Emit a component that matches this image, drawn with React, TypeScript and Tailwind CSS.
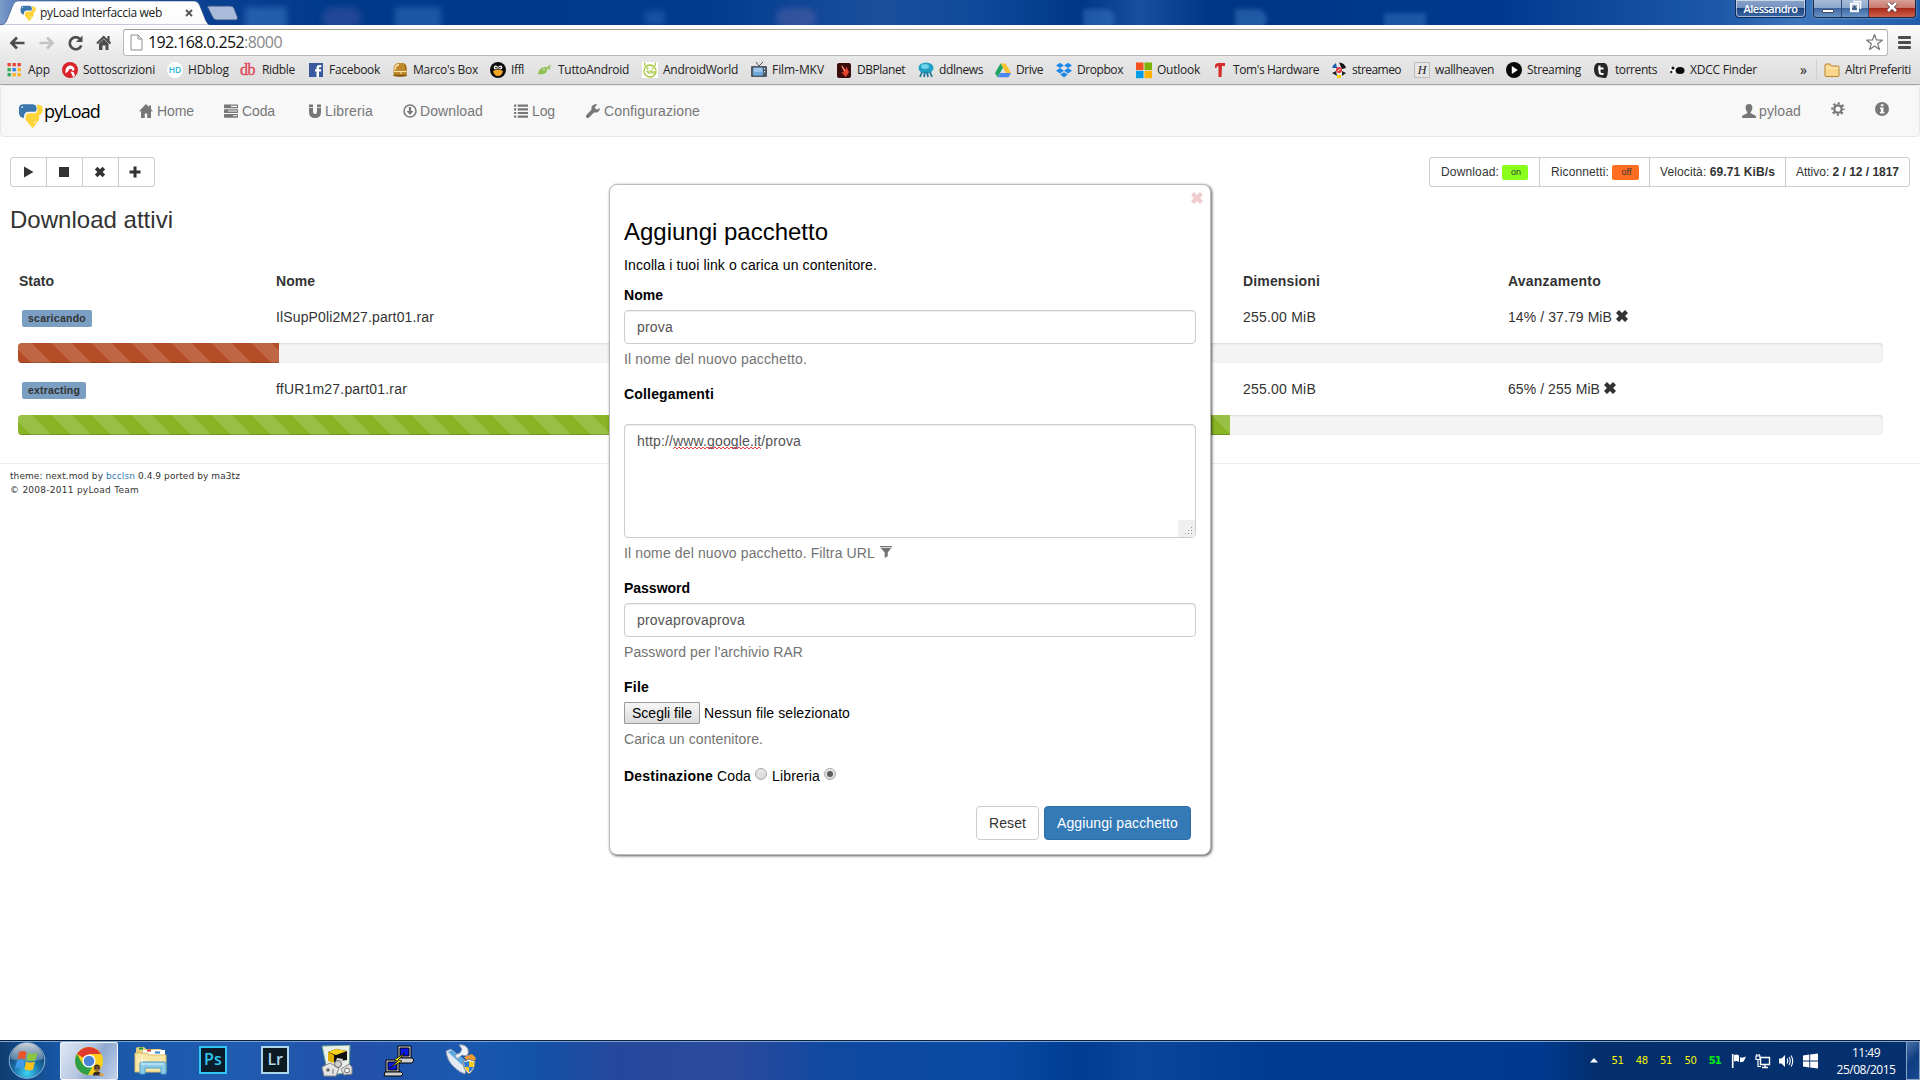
import React, { useLayoutEffect, useRef } from "react";

/** Single-line text whose tracking is adjusted so that it fills exactly `w` pixels. */
function Fit({ w, className = "", children }: { w: number; className?: string; children: React.ReactNode }) {
  const ref = useRef<HTMLSpanElement>(null);
  useLayoutEffect(() => {
    const el = ref.current;
    if (!el) return;
    el.style.letterSpacing = "0px";
    const n = (el.textContent || "").length || 1;
    el.style.letterSpacing = `${(w - el.getBoundingClientRect().width) / n}px`;
  }, [w]);
  return (
    <span ref={ref} className={`inline-block whitespace-pre ${className}`}>
      {children}
    </span>
  );
}

const UI = "font-['Open_Sans','Noto_Sans',sans-serif]";

function PyLogo({ size }: { size: number }) {
  return (
    <svg width={size} height={size} viewBox="0 0 27 27" className="shrink-0">
      <path d="M1 6q0-4 4-4.600h11q4 .6 4 4v2q0 2-2 2h-7q-4 0-4.500 5v1.600H5q-4-1-4-6z" fill="#3b76ad" />
      <path d="M20.500 2h2.500q4 .6 3.700 5.500-.3 4.500-3.700 5.500l-.2 5-6.300 8.500q-.8.800-1.500 0L8.200 18v-3q0-4 4.300-4h5.500q3 0 3-4z" fill="#fdd43a" />
      <circle cx="4.500" cy="4.400" r=".9" fill="#fff" />
      <circle cx="18.300" cy="20.600" r="1" fill="#fff" />
    </svg>
  );
}

type G = { s?: number; className?: string };
const Svg = ({ s = 14, className = "", children }: G & { children: React.ReactNode }) => (
  <svg width={s} height={s} viewBox="0 0 14 14" fill="currentColor" className={`shrink-0 ${className}`}>
    {children}
  </svg>
);
const Home = (p: G) => <Svg {...p}><path d="M7 0L0 7.300h2V14h3.800V9.500h2.400V14H12V7.300h2l-2-2.100V1.500h-2v1.600z" /></Svg>;
const Tasks = (p: G) => (
  <Svg {...p}>
    <rect y=".5" width="14" height="3.800" rx=".6" /><rect y="5.200" width="14" height="3.800" rx=".6" /><rect y="9.900" width="14" height="3.800" rx=".6" />
    <path d="M7 1.800h6v1.100H7zM4 6.500h9v1.100H4zM9 11.200h4v1.100H9z" fill="#f8f8f8" />
  </Svg>
);
const Magnet = (p: G) => (
  <Svg {...p}>
    <path d="M1 3.800h4v4.100q0 2 2 2t2-2V3.800h4v4.400Q13 14 7 14T1 8.200zM1 .5h4v2.400H1zM9 .5h4v2.400H9z" />
  </Svg>
);
const DownCircle = (p: G) => (
  <Svg {...p}>
    <circle cx="7" cy="7" r="6" fill="none" stroke="currentColor" strokeWidth="1.500" />
    <path d="M5.900 3h2.200v4h2.300L7 11 3.600 7h2.300z" />
  </Svg>
);
const List = (p: G) => (
  <Svg {...p}>
    <path d="M0 .5h2.200v2.200H0zM0 4.200h2.200v2.200H0zM0 7.900h2.200v2.200H0zM0 11.600h2.200v2.200H0zM3.700.5H14v2.200H3.700zM3.700 4.200H14v2.200H3.700zM3.700 7.900H14v2.200H3.700zM3.700 11.600H14v2.200H3.700z" />
  </Svg>
);
const Wrench = (p: G) => (
  <Svg {...p}>
    <path d="M9.800.2a4 4 0 0 0-4.200 5.300L.5 10.900a1.700 1.700 0 0 0 2.500 2.500l5.300-5.200A4 4 0 0 0 13.800 4l-2.500 1.600-2-.9-.2-2L11.400.6A4 4 0 0 0 9.800.2z" />
  </Svg>
);
const User = (p: G) => (
  <Svg {...p}>
    <path d="M7 0c2.300 0 3.400 1.500 3.400 3.800 0 1.900-.8 3.500-1.700 4.300v1.200c1.500.9 5.100 1.700 5.300 3.200V14H0v-1.500c.2-1.500 3.800-2.300 5.300-3.200V8.100C4.400 7.300 3.600 5.700 3.600 3.800 3.600 1.500 4.700 0 7 0z" />
  </Svg>
);
const Cog = (p: G) => (
  <Svg {...p}>
    <g fill="none" stroke="currentColor">
      <circle cx="7" cy="7" r="3.700" strokeWidth="2.300" />
      <circle cx="7" cy="7" r="5.700" strokeWidth="2.200" strokeDasharray="2.240 2.240" strokeDashoffset="1.120" />
    </g>
  </Svg>
);
const Info = (p: G) => (
  <Svg {...p}>
    <circle cx="7" cy="7" r="7" />
    <path d="M5.800 2.200h2.700v2H5.800zM5 5.400h3.500v4.500h.9v1.600H4.900V9.900h.9V7H5z" fill="#f8f8f8" />
  </Svg>
);
const Cross = (p: G) => (
  <Svg {...p}>
    <path d="M4 1l3 2.900L10 1l3 3-2.900 3L13 10l-3 3-3-2.900L4 13l-3-3 2.900-3L1 4z" />
  </Svg>
);
const Filter = (p: G) => <Svg {...p}><path d="M0 0h14v1.600H0zM.8 2.400h12.400L9 7.600V12l-3.500 2V7.600z" /></Svg>;

const bookmarkIcons: React.ReactNode[] = [
  <g>
    {["#ea4335", "#ea4335", "#ea4335", "#34a853", "#2b7de9", "#fbb11a", "#34a853", "#fbb11a", "#fbb11a"].map((c, i) => (
      <rect key={i} x={(i % 3) * 5 + 0.500} y={Math.floor(i / 3) * 5 + 1} width="3.300" height="3.300" fill={c} />
    ))}
  </g>,
  <g><circle cx="8" cy="8" r="8" fill="#d8232a" /><path d="M3.500 11.500V8q1-4.500 5-4.500 4 .5 4 4.500l-2 1-1-2H7.500L6 9.500zM8.500 9.500l3 .5 1.500 3.500-2 1.500z" fill="#fff" /></g>,
  <g><circle cx="8" cy="8" r="8" fill="#fff" /><text x="8" y="11" textAnchor="middle" fontSize="8.500" fontWeight="600" fill="#2db4d6" fontFamily="Open Sans">HD</text></g>,
  <text x="7.600" y="13" textAnchor="middle" fontSize="16" fill="#e04055" stroke="#e04055" strokeWidth=".3" letterSpacing="-.5" fontFamily="Liberation Serif">db</text>,
  <g><rect x="1" y="1" width="14" height="14" fill="#3b579d" /><path d="M8.500 15V9.500H7V7.300h1.500V6c0-2.200 1-3 3-3h1.800v2.200H12c-.8 0-1 .3-1 1v1.100h2.300L13 9.500h-2V15z" fill="#fff" /></g>,
  <g><path d="M1.500 9.500Q1 1.500 6 1h5q4 .5 3.800 6.500V14q-6.500 1.500-13.300 0z" fill="#c08a2c" /><path d="M3 8q0-5 4-5.500" stroke="#ffe9b5" strokeWidth="1.300" fill="none" /><path d="M12.500 2.500q1.500 2 1.200 5" stroke="#8a5a18" fill="none" /><path d="M2 9.500h12.500M9 9v3.500" stroke="#ffe09a" /><path d="M1.500 12.500h13.300V14q-6.500 1.500-13.300 0z" fill="#7a4c10" opacity=".8" /></g>,
  <g><circle cx="8" cy="8" r="8" fill="#0b0b0b" /><circle cx="5.700" cy="5.500" r="2" fill="#fff" /><circle cx="10.300" cy="5.500" r="2" fill="#fff" /><circle cx="6" cy="5.600" r=".9" /><circle cx="10" cy="5.600" r=".9" /><path d="M3 9q5-3 10 0-1 5-5 5T3 9z" fill="#f5a623" /></g>,
  <g fill="#8cc152"><path d="M1 12q1-8 10-7l-2 6q-4 2-8 1z" /><path d="M11 4l3-1-1.500 3L14 8l-3-1z" /><circle cx="7" cy="7.500" r=".9" fill="#ddd" /></g>,
  <g><rect width="16" height="16" fill="#fff" /><circle cx="8" cy="9" r="6" fill="none" stroke="#a4c639" strokeWidth="1.300" /><path d="M3 4L2.500.5M13 4l.5-3.500M4 9h2v2h2V9h2v2h2V9" stroke="#a4c639" strokeWidth="1.200" fill="none" /><circle cx="5.500" cy="6.500" r="1" fill="#a4c639" /><circle cx="10.500" cy="6.500" r="1" fill="#a4c639" /></g>,
  <g><path d="M5 0l3 4 4-4" stroke="#555" fill="none" /><rect y="4" width="16" height="11" rx="1" fill="#4e5a66" /><rect x="2" y="5.500" width="10" height="8" rx="1" fill="#6fa8dc" /><path d="M3 7h8M3 9h8" stroke="#cfe4f7" /><path d="M13.500 6v1.500M13.500 9v1.500" stroke="#ddd" /></g>,
  <g><rect x="1" y="1" width="14" height="15" rx="2" fill="#3a0c0c" /><path d="M5 3l5 5V4l3 6-3 5-5-5 3 .5z" fill="#e8432e" /><path d="M6 4l3 5" stroke="#f6b48a" /></g>,
  <g><ellipse cx="8" cy="6" rx="7.500" ry="5.500" fill="#1f9fc4" /><ellipse cx="7" cy="4.500" rx="4" ry="2.500" fill="#6ed3ea" /><path d="M4 10l-2 5M7 10l-1 5M9 10l1 5M12 10l2 5" stroke="#24789a" strokeWidth="1.800" /></g>,
  <g><path d="M5.500 1.500h5L16 11h-5z" fill="#fbc02d" /><path d="M5.500 1.500L0 11l2.500 4.200L8 5.700z" fill="#1da462" /><path d="M5.200 11H16l-2.500 4.200H2.700z" fill="#4a86f0" /></g>,
  <g fill="#1e88ea"><path d="M4 .8l4 2.700-4 2.600L0 3.500zM12 .8l4 2.700-4 2.600-4-2.600zM4 6.100l4 2.600-4 2.700-4-2.700zM12 6.100l4 2.600-4 2.700-4-2.700zM8 10.200l3.800 2.400L8 15.500l-3.800-2.900z" /></g>,
  <g><path d="M0 .5h7.500V8H0z" fill="#f4511e" /><path d="M8.500.5H16V8H8.500z" fill="#7cb305" /><path d="M0 8.800h7.500v7.400H0z" fill="#039be5" /><path d="M8.500 8.800H16v7.400H8.500z" fill="#ffb300" /></g>,
  <path d="M3 4q0-3 4-3h6v3h-3l-.5 11h-3L6.500 4.500 5 4.300 4.500 6H3z" fill="#d62c2c" />,
  <g><circle cx="8" cy="8" r="7.500" fill="#e9e9e9" /><path d="M8 .5A7.500 7.500 0 0 1 15 6l-4 1z" fill="#111" /><path d="M1 6a7.500 7.500 0 0 1 4-5l1 5z" fill="#1c5fb0" /><path d="M1 11l4-2 1 5zM11 9l4 2-4 3z" fill="#222" /><circle cx="8" cy="8" r="3" fill="#d33" /><path d="M6.500 9l3-2" stroke="#fff" /><path d="M6 13h4v3H6z" fill="#f5d000" /></g>,
  <g><rect x=".5" y=".5" width="15" height="15" fill="#e6e6e6" stroke="#bdbdbd" /><text x="8" y="12" textAnchor="middle" fontSize="12" fontStyle="italic" fill="#222" fontFamily="Liberation Serif">H</text></g>,
  <g><circle cx="8" cy="8" r="8" fill="#0a0a0a" /><path d="M5.800 4l6 4-6 4z" fill="#fff" /></g>,
  <g><path d="M4 1h8q3 2 3 7t-2 8h-2L5 15Q1 13 1 7q0-4 3-6z" fill="#262626" /><path d="M6.500 3.500v6q0 2.500 2.500 2.500h1.500M5 6.500h5.500" stroke="#fff" strokeWidth="2" fill="none" /></g>,
  <g><ellipse cx="4.500" cy="8" rx="4" ry="3.500" fill="#fff" /><ellipse cx="11" cy="8.500" rx="4.500" ry="3.500" fill="#0a0a0a" /><circle cx="4" cy="6" r="1.600" fill="#111" /><circle cx="2.300" cy="10" r="1.200" fill="#222" /></g>,
];

// [icon x, text x, text width, label]
const bookmarks: [number, number, number, string][] = [
  [7, 28, 22, "App"], [62, 83, 72, "Sottoscrizioni"], [167, 188, 41, "HDblog"], [240, 262, 33, "Ridble"],
  [308, 329, 51, "Facebook"], [392, 413, 65, "Marco's Box"], [490, 511, 13, "Iffl"], [537, 558, 71, "TuttoAndroid"],
  [642, 663, 75, "AndroidWorld"], [751, 772, 52, "Film-MKV"], [836, 857, 48, "DBPlanet"], [918, 939, 44, "ddlnews"],
  [995, 1016, 27, "Drive"], [1056, 1077, 46, "Dropbox"], [1136, 1157, 43, "Outlook"], [1212, 1233, 86, "Tom's Hardware"],
  [1331, 1352, 49, "streameo"], [1414, 1435, 59, "wallheaven"], [1506, 1527, 54, "Streaming"], [1593, 1615, 42, "torrents"],
  [1669, 1690, 67, "XDCC Finder"],
];

function TabStrip() {
  return (
    <div className="relative flex h-[25px] overflow-hidden bg-[linear-gradient(90deg,#7d9ccb_0,#5f86bf_12px,#0a3f92_210px,#00398a_360px,#003b8e_700px,#1b4f9c_880px,#10499a_980px,#003787_1080px,#1a4f9f_1140px,#003684_1210px,#003a8f_1500px,#1d59a8_1720px,#3e76bd_1800px,#1f5daa_1920px)]">
      <div className="absolute left-[245px] top-[7px] h-[22px] w-[42px] bg-[#5c9ae0]/35 blur-[3px]" />
      <div className="absolute left-[322px] top-[7px] h-[22px] w-[40px] rounded-full bg-[#6a67b0]/30 blur-[3px]" />
      <div className="absolute left-[395px] top-[7px] h-[22px] w-[46px] bg-[#5c9ae0]/30 blur-[3px]" />
      <div className="absolute left-[645px] top-[11px] h-[14px] w-[20px] bg-[#5c9ae0]/25 blur-[3px]" />
      <div className="absolute left-[776px] top-[8px] h-[20px] w-[40px] rounded-full bg-[#7a6db0]/35 blur-[3px]" />
      <div className="absolute left-[1083px] top-[9px] h-[20px] w-[32px] rounded-r-full bg-[#5c9ae0]/30 blur-[2px]" />
      <div className="absolute left-[1235px] top-[9px] h-[20px] w-[32px] rounded-r-full bg-[#5c9ae0]/35 blur-[2px]" />
      <div className="absolute left-[1384px] top-[13px] h-[16px] w-[42px] bg-[#5c9ae0]/30 blur-[2px]" />
      <svg width="240" height="25" className="absolute left-0 top-0">
        <defs>
          <linearGradient id="tab" x1="0" y1="0" x2="0" y2="1"><stop offset="0" stopColor="#fff" /><stop offset="1" stopColor="#fbfbfb" /></linearGradient>
        </defs>
        <path d="M0 25q5 0 7-5l6-15q1.500-4 5-4h176q4 0 5.500 4l6 15q2 5 5 5z" fill="url(#tab)" stroke="#1b3a6b" strokeOpacity=".5" />
        <path d="M208 6h22q3 0 4 2l3.500 9q1 3-2 3h-19q-3 0-4-3l-4.500-9q-1-2 0-2z" fill="#a9bbd8" stroke="#30528b" />
      </svg>
      <div className="relative flex h-[25px] w-[200px] items-center pl-5">
        <PyLogo size={16} />
        <Fit w={122} className={`ml-1 text-[12px] leading-[25px] text-[#222] ${UI}`}>pyLoad Interfaccia web</Fit>
        <svg width="8" height="8" viewBox="0 0 8 8" className="ml-[23px]"><path d="M1 1l6 6M7 1L1 7" stroke="#555" strokeWidth="1.800" /></svg>
      </div>
      <div className="ml-auto mr-1 flex gap-[7px]">
        <div className={`flex h-[18px] w-[71px] items-center justify-center rounded-b-[4px] border border-t-0 border-[#0d2a5c] bg-[linear-gradient(#8aa5ca_0,#7190bd_50%,#1c4480_50%,#3c6aa5_100%)] text-white shadow-[inset_0_0_0_1px_rgba(255,255,255,.55)] ${UI}`}>
          <Fit w={54} className="text-[11px] font-semibold leading-[16px] text-white">Alessandro</Fit>
        </div>
        <div className="flex h-[18px] overflow-hidden rounded-b-[4px] border border-t-0 border-[#1c2a44] shadow-[0_0_2px_rgba(255,255,255,.6)]">
          <div className="flex w-[28px] items-center justify-center border-r border-[#2b4774] bg-[linear-gradient(#a7bcd8_0,#8aa6ca_50%,#3f68a0_50%,#6a94c8_100%)]">
            <div className="mt-1 h-[4px] w-[12px] rounded-[1px] border border-[#3a4a66] bg-white" />
          </div>
          <div className="flex w-[27px] items-center justify-center border-r border-[#2b4774] bg-[linear-gradient(#a7bcd8_0,#8aa6ca_50%,#3f68a0_50%,#6a94c8_100%)]">
            <svg width="13" height="13" viewBox="0 0 13 13" className="-mt-1"><path d="M4 1.500h7.500V9" fill="none" stroke="#fff" strokeWidth="1.500" /><rect x="2" y="3.700" width="7" height="7.500" fill="none" stroke="#fff" strokeWidth="2" /><rect x="4.500" y="6" width="2" height="3" fill="#3a4a66" /></svg>
          </div>
          <div className="flex w-[46px] items-center justify-center bg-[linear-gradient(#d9a097_0,#c9756a_50%,#a92a1a_50%,#d0604a_100%)]">
            <svg width="12" height="10" viewBox="0 0 12 10" className="-mt-1"><path d="M2 1l8 8M10 1L2 9" stroke="#4a3038" strokeWidth="4" /><path d="M2 1l8 8M10 1L2 9" stroke="#fff" strokeWidth="2.600" /></svg>
          </div>
        </div>
      </div>
    </div>
  );
}

function Toolbar() {
  return (
    <div className="flex h-[60px] flex-col border-b border-[#a5a5a5] bg-[linear-gradient(#fdfdfd,#e9e9e9_50%,#dddddd)]">
      <div className="flex h-[34px] shrink-0 items-center pl-2 pt-[1px]">
        <svg width="18" height="16" viewBox="0 0 18 16"><path d="M16.500 8H4M9 2.500L3.500 8 9 13.500" fill="none" stroke="#4d4d4d" strokeWidth="2.700" /></svg>
        <svg width="18" height="16" viewBox="0 0 18 16" className="ml-3"><path d="M1.500 8H14M9 2.500L14.500 8 9 13.500" fill="none" stroke="#c3c3c3" strokeWidth="2.700" /></svg>
        <svg width="18" height="18" viewBox="0 0 18 18" className="ml-[11px]"><path d="M14.300 11.500a6 6 0 1 1-1-6.200" fill="none" stroke="#4d4d4d" strokeWidth="2.700" /><path d="M15.500 1.500V8H9z" fill="#4d4d4d" /></svg>
        <svg width="16" height="18" viewBox="0 0 16 18" className="ml-[11px]"><path d="M1 9.500L7.700 3l6.800 6.500M12.500 2v5" fill="none" stroke="#4d4d4d" strokeWidth="2.200" /><path d="M3 9.500L7.700 5l4.800 4.500V16H9.500v-4.500h-3V16H3z" fill="#4d4d4d" /></svg>
        <div className={`ml-[11px] flex h-[27px] w-[1765px] items-center rounded-[3px] border border-[#b9b9b9] border-t-[#9d9d9d] bg-white pl-[6px] ${UI}`}>
          <svg width="13" height="17" viewBox="0 0 13 17"><path d="M1 1h7l4 4v11H1zM8 1v4h4" fill="#fff" stroke="#8e8e8e" /></svg>
          <Fit w={96} className="ml-[5px] text-[16px] leading-[25px] text-[#111]">192.168.0.252</Fit>
          <Fit w={38} className="text-[16px] leading-[25px] text-[#888]">:8000</Fit>
          <svg width="19" height="19" viewBox="0 0 19 19" className="ml-auto mr-[3px]"><path d="M9.500 1.500l2 5.500 5.800.2-4.600 3.600 1.700 5.600-4.900-3.300-4.900 3.300 1.700-5.600L1.700 7.200 7.500 7z" fill="#fff" stroke="#777" strokeWidth="1.200" strokeLinejoin="round" /></svg>
        </div>
        <div className="ml-[10px] flex flex-col gap-[2px]">
          <div className="h-[3px] w-[13px] rounded-[1px] bg-[#4d4d4d]" />
          <div className="h-[3px] w-[13px] rounded-[1px] bg-[#4d4d4d]" />
          <div className="h-[3px] w-[13px] rounded-[1px] bg-[#4d4d4d]" />
        </div>
      </div>
      <div className={`flex h-[22px] shrink-0 items-center pl-[7px] text-[12px] text-[#222] ${UI}`}>
        {bookmarks.map(([x, tx, w, label], i) => (
          <div key={label} className="flex shrink-0 items-center" style={{ width: (bookmarks[i + 1]?.[0] ?? 1794) - x }}>
            <svg width="16" height="16" viewBox="0 0 16 16" className="shrink-0 overflow-visible">{bookmarkIcons[i]}</svg>
            <span className="leading-[18px]" style={{ marginLeft: tx - x - 16 }}><Fit w={w}>{label}</Fit></span>
          </div>
        ))}
        <span className="w-[22px] pl-[6px] text-[14px] leading-[16px]">»</span>
        <div className="h-[20px] w-px bg-[#cfcfcf]" />
        <svg width="16" height="14" viewBox="0 0 16 14" className="ml-[7px]"><path d="M1 12.500V2q0-1 1-1h4l1.500 2H14q1 0 1 1v8.500q0 1-1 1H2q-1 0-1-1z" fill="#f9d68a" stroke="#b88331" /><path d="M1.500 5h13" stroke="#fdeec6" /></svg>
        <Fit w={66} className="ml-[5px] leading-[18px]">Altri Preferiti</Fit>
      </div>
    </div>
  );
}

function Navbar() {
  const item = "flex items-center gap-[3px]";
  return (
    <nav className="flex h-[52px] items-center rounded-[4px] border border-[#e7e7e7] bg-[#f8f8f8] pl-[17px] text-[14px] leading-5 text-[#777]">
      <div className="flex w-[121px] items-center pt-2">
        <PyLogo size={25} />
        <Fit w={56} className="-mt-[9px] ml-[1px] font-['Open_Sans',sans-serif] text-[18px] leading-6 text-black">pyLoad</Fit>
      </div>
      <div className={`${item} w-[85px]`}><Home /><Fit w={38} className="pl-px">Home</Fit></div>
      <div className={`${item} w-[84px]`}><Tasks /><Fit w={34} className="pl-px">Coda</Fit></div>
      <div className={`${item} w-[95px]`}><Magnet /><Fit w={48}>Libreria</Fit></div>
      <div className={`${item} w-[111px]`}><DownCircle /><Fit w={63}>Download</Fit></div>
      <div className={`${item} w-[72px]`}><List /><Fit w={24} className="pl-px">Log</Fit></div>
      <div className={item}><Wrench /><Fit w={97} className="pl-px">Configurazione</Fit></div>
      <div className={`${item} ml-auto`}><User /><Fit w={42}>pyload</Fit></div>
      <Cog className="-mt-1 ml-[30px]" />
      <Info className="-mt-1 ml-[30px] mr-[30px]" />
    </nav>
  );
}

const stripes =
  "bg-[linear-gradient(45deg,rgba(255,255,255,.15)_25%,transparent_25%,transparent_50%,rgba(255,255,255,.15)_50%,rgba(255,255,255,.15)_75%,transparent_75%,transparent)]";

function DownloadRow({ status, bw, name, nw, prog, pw, pct, color }: { status: string; bw: number; name: string; nw: number; prog: string; pw: number; pct: number; color: string }) {
  return (
    <div className="h-[72px]">
      <div className="grid h-9 grid-cols-[258px_967px_265px_1fr] items-center text-[14px] leading-5">
        <div className="flex pl-3 pt-[3px]">
          <span className="flex h-[17px] items-center rounded-[2px] bg-[#7a9fc2] px-[6px] text-[10.500px] font-bold leading-none">
            <Fit w={bw}>{status}</Fit>
          </span>
        </div>
        <div className="pl-2"><Fit w={nw}>{name}</Fit></div>
        <div className="pl-2"><Fit w={73}>255.00 MiB</Fit></div>
        <div className="flex items-center gap-[3px] pl-2"><Fit w={pw}>{prog}</Fit><Cross s={14} className="-mt-[2px]" /></div>
      </div>
      <div className="px-2 pt-2">
        <div className="h-5 w-[1865px] overflow-hidden rounded-[4px] bg-[#f4f4f4] shadow-[inset_0_1px_2px_rgba(0,0,0,.12)]">
          <div className={`h-full bg-[length:40px_40px] bg-[position:-6px_0] shadow-[inset_0_-1px_0_rgba(0,0,0,.18)] ${stripes} ${color}`} style={{ width: `${pct}%` }} />
        </div>
      </div>
    </div>
  );
}

function Dashboard() {
  const btn = "flex h-full flex-1 items-center justify-center";
  return (
    <main className="px-[10px] pt-5 text-[#333]">
      <div className="flex h-[30px] justify-between">
        <div className="flex w-[145px] divide-x divide-[#ccc] rounded-[3px] border border-[#ccc] bg-white">
          <div className={btn}><svg width="10" height="12" viewBox="0 0 10 12"><path d="M0 .5L9.500 6 0 11.500z" fill="#333" /></svg></div>
          <div className={btn}><div className="mr-px h-[10px] w-[10px] bg-[#333]" /></div>
          <div className={btn}><Cross s={12} className="-mt-px mr-[2px]" /></div>
          <div className={btn}><svg width="12" height="12" viewBox="0 0 12 12" className="mr-[3px]"><path d="M4.500.500h3v4h4v3h-4v4h-3v-4h-4v-3h4z" fill="#333" /></svg></div>
        </div>
        <div className="flex w-[481px] divide-x divide-[#ccc] rounded-[3px] border border-[#ccc] bg-white text-[12px] leading-[18px]">
          <div className="flex w-[110px] items-center gap-[3px] pl-[11px]"><Fit w={58}>Download:</Fit><span className="flex h-[15px] w-[26px] items-center justify-center rounded-[2px] bg-[#8aff1c] pl-[2px] text-[9px] leading-none">on</span></div>
          <div className="flex w-[110px] items-center gap-[3px] pl-[11px]"><Fit w={58}>Riconnetti:</Fit><span className="flex h-[15px] w-[27px] items-center justify-center rounded-[2px] bg-[#ff6d22] pl-[2px] text-[9px] leading-none">off</span></div>
          <div className="flex w-[136px] items-center justify-center"><Fit w={115}>Velocità: <b>69.71 KiB/s</b></Fit></div>
          <div className="flex flex-1 items-center justify-center"><Fit w={103}>Attivo: <b>2 / 12 / 1817</b></Fit></div>
        </div>
      </div>
      <h1 className="mt-5 text-[24px] leading-[26px]"><Fit w={163}>Download attivi</Fit></h1>
      <div className="mt-[30px] grid h-9 grid-cols-[258px_967px_265px_1fr] items-center text-[14px] font-bold leading-5">
        <div className="pl-[9px]"><Fit w={35}>Stato</Fit></div>
        <div className="pl-2"><Fit w={39}>Nome</Fit></div>
        <div className="pl-2"><Fit w={77}>Dimensioni</Fit></div>
        <div className="pl-2"><Fit w={93}>Avanzamento</Fit></div>
      </div>
      <DownloadRow status="scaricando" bw={58} name="IlSupP0li2M27.part01.rar" nw={158} prog="14% / 37.79 MiB" pw={104} pct={14} color="bg-[#b44c25]" />
      <DownloadRow status="extracting" bw={52} name="ffUR1m27.part01.rar" nw={131} prog="65% / 255 MiB" pw={92} pct={65} color="bg-[#88b425]" />
      <div className="-mx-[10px] mt-5 border-t border-[#eee] px-[10px] pt-[5px] font-['DejaVu_Sans',sans-serif] text-[9px] leading-[14px]">
        <Fit w={230}>theme: next.mod by <span className="text-[#337ab7]">bcclsn</span> 0.4.9 ported by ma3tz</Fit>
        <div><Fit w={129}>© 2008-2011 pyLoad Team</Fit></div>
      </div>
    </main>
  );
}

function Radio({ on = false }: { on?: boolean }) {
  return (
    <span className="mb-1 flex h-3 w-3 items-center justify-center rounded-full border border-[#a8a8a8] bg-[linear-gradient(#e9e9e9,#dadada)]">
      {on && <span className="h-[6px] w-[6px] rounded-full bg-[#5c5c5c]" />}
    </span>
  );
}

function AddPackageDialog() {
  const input = "flex h-[34px] w-[572px] items-center rounded-[4px] border border-[#ccc] bg-white px-3 text-[#555] shadow-[inset_0_1px_1px_rgba(0,0,0,.075)]";
  return (
    <section className="absolute left-[609px] top-[184px] h-[671px] w-[602px] rounded-[8px] border border-[#bbb] bg-white pl-[14px] pt-[34px] text-[14px] leading-5 text-black shadow-[1px_1px_3px_rgba(0,0,0,.65)]">
      <Cross s={14} className="absolute right-[6px] top-[6px] text-[#f0cccc]" />
      <h2 className="text-[24px] leading-[26px]"><Fit w={204}>Aggiungi pacchetto</Fit></h2>
      <p className="mt-[10px]"><Fit w={253}>Incolla i tuoi link o carica un contenitore.</Fit></p>
      <p className="mb-[5px] mt-[10px] font-bold"><Fit w={39}>Nome</Fit></p>
      <div className={input}><Fit w={36}>prova</Fit></div>
      <p className="mt-[5px] text-[#737373]"><Fit w={183}>Il nome del nuovo pacchetto.</Fit></p>
      <p className="mt-[15px] font-bold"><Fit w={90}>Collegamenti</Fit></p>
      <div className="relative mt-5 h-[114px] w-[572px] rounded-[4px] border border-[#ccc] px-3 py-[6px] text-[#555] shadow-[inset_0_1px_1px_rgba(0,0,0,.075)]">
        <Fit w={164}>http://www.google.it/prova</Fit>
        <svg width="88" height="4" className="absolute left-[48px] top-[21px]">
          <path d={"M0 3" + "l2 -2l2 2".repeat(22)} fill="none" stroke="#f03c3c" />
        </svg>
        <div className="absolute bottom-0 right-0 h-[17px] w-[17px] bg-[#efefef]">
          <svg width="17" height="17" fill="#9a9a9a"><path d="M13 7h1v1h-1zM13 10h1v1h-1zM10 10h1v1h-1zM13 13h1v1h-1zM10 13h1v1h-1zM7 13h1v1H7z" /></svg>
        </div>
      </div>
      <p className="mt-[5px] flex items-center gap-[5px] text-[#737373]"><Fit w={251}>Il nome del nuovo pacchetto. Filtra URL</Fit><Filter s={12} className="-mt-[2px]" /></p>
      <p className="mb-[5px] mt-[15px] font-bold"><Fit w={66}>Password</Fit></p>
      <div className={input}><Fit w={108}>provaprovaprova</Fit></div>
      <p className="mt-[5px] text-[#737373]"><Fit w={179}>Password per l'archivio RAR</Fit></p>
      <p className="mb-[5px] mt-[15px] font-bold"><Fit w={25}>File</Fit></p>
      <div className="flex h-[22px] items-center gap-1">
        <div className="flex h-[22px] w-[76px] items-center justify-center rounded-[1px] border border-[#999] bg-[linear-gradient(#f6f6f6,#dcdcdc)]"><Fit w={60}>Scegli file</Fit></div>
        <Fit w={146}>Nessun file selezionato</Fit>
      </div>
      <p className="mt-[5px] text-[#737373]"><Fit w={139}>Carica un contenitore.</Fit></p>
      <div className="mt-[17px] flex h-5 items-center">
        <b><Fit w={89}>Destinazione</Fit></b>
        <Fit w={34} className="ml-1 mr-1">Coda</Fit><Radio />
        <Fit w={48} className="ml-[5px] mr-1">Libreria</Fit><Radio on />
      </div>
      <div className="mt-5 flex h-[34px] justify-end gap-[5px] pr-[19px]">
        <div className="flex w-[63px] items-center justify-center rounded-[4px] border border-[#ccc] bg-white text-[#333]"><Fit w={37}>Reset</Fit></div>
        <div className="flex w-[147px] items-center justify-center rounded-[4px] border border-[#2e6da4] bg-[#337ab7] text-white"><Fit w={121}>Aggiungi pacchetto</Fit></div>
      </div>
    </section>
  );
}

function Taskbar() {
  const temps: [string, string][] = [["51", "text-[#f6f600]"], ["48", "text-[#f6f600]"], ["51", "text-[#f6f600]"], ["50", "text-[#f6f600]"], ["51", "font-bold text-[#00f010]"]];
  return (
    <footer className={`flex h-10 items-center overflow-hidden border-t border-[#0b2140] bg-[linear-gradient(90deg,#103d70_0,#1858a8_60px,#1f5cb0_240px,#2450a8_360px,#1b59b0_460px,#1253a8_530px,#26489c_620px,#2b4a9d_730px,#1049a0_830px,#084aa4_1000px,#003d92_1080px,#0a469a_1140px,#003c92_1260px,#003a8e_1540px,#042e6c_1600px,#06316f_1920px)] shadow-[inset_0_1px_0_#7ea3cf] ${UI}`}>
      <svg width="60" height="40" viewBox="0 0 60 40">
        <defs>
          <radialGradient id="orb" cx=".5" cy=".85" r=".8"><stop offset="0" stopColor="#3ed4f5" /><stop offset=".5" stopColor="#1a6aa5" /><stop offset="1" stopColor="#0b2f57" /></radialGradient>
          <linearGradient id="gloss" x1="0" y1="0" x2="0" y2="1"><stop offset="0" stopColor="#fff" stopOpacity=".8" /><stop offset="1" stopColor="#fff" stopOpacity=".2" /></linearGradient>
        </defs>
        <circle cx="27" cy="19.500" r="17.800" fill="url(#orb)" stroke="#8db4d6" />
        <path d="M10.500 18a16.500 16 0 0 1 33 0q-16 5-33 0z" fill="url(#gloss)" />
        <path d="M19 11q4-2 7.500 0L25 18.500q-4-2-7.500 0z" fill="#e8562a" />
        <path d="M28 11.500q4 2.500 9.500 0l-2 7.500q-5 2-9-.2z" fill="#8cc63f" />
        <path d="M17 20q4-2 7.700 0L23 28q-4-2.500-8-.5z" fill="#3f9be8" />
        <path d="M26 20.500q4 2 9 0l-2 8q-5 2-8.500-.5z" fill="#fcc21b" />
      </svg>
      <div className="flex h-[38px] w-[58px] items-center justify-center rounded-[2px] border border-white/80 bg-[linear-gradient(120deg,#dfe7f4_0,#b5c6e2_45%,#8ea9d2_60%,#c3d2ea_100%)]">
        <svg width="30" height="30" viewBox="0 0 30 30">
          <circle cx="15" cy="15" r="14" fill="#fbcf1c" />
          <path d="M15 15L2.900 8A14 14 0 0 1 27.100 8H15z" fill="#e03a2d" />
          <path d="M15 15L9 18.500 2.900 8A14 14 0 0 0 14 29l5-10z" fill="#2e9e48" />
          <circle cx="15" cy="15" r="6.600" fill="#fff" /><circle cx="15" cy="15" r="5.300" fill="#4a84d8" />
          <circle cx="23" cy="22" r="3.200" fill="#9c6b3a" /><path d="M19.500 20.500q3.500-4 7 0zM19 29.500q0-4 4-4t4 4z" fill="#3a2b20" /><path d="M20.500 22h2M23.500 22h2" stroke="#222" strokeWidth="1.300" /><path d="M25.500 28l4 1" stroke="#f4a020" strokeWidth="2" />
        </svg>
      </div>
      <svg width="34" height="30" viewBox="0 0 34 30" className="ml-4">
        <path d="M2 3q0-2 2-2h6l2 2h14q2 0 2 2v20H2z" fill="#e7cd7c" /><path d="M9 4h22v5H9z" fill="#fff" /><rect x="5" y="1.500" width="4" height="2" fill="#1d9a3e" /><rect x="13" y="3.500" width="4" height="2" fill="#c9382b" /><rect x="21" y="5.500" width="5" height="2" fill="#2a7fd4" />
        <path d="M1 7h12l2 2h17v17H1z" fill="#f8e7a4" stroke="#d8bd68" /><path d="M6 28V18q0-2 2-2h22q2 0 2 2v10h-5v-6H11v6z" fill="#8ccbe8" stroke="#4f9fca" /><path d="M8 18h22" stroke="#dff3fc" /><path d="M8 9v10M3 14h10" stroke="#fff" strokeOpacity=".7" />
      </svg>
      <div className="-mt-[2px] ml-[31px] flex h-7 w-7 items-center justify-center border-2 border-[#31c5f4] bg-[#0a1b2a] pb-[1px] text-[16px] font-semibold leading-none text-[#31c5f4]"><Fit w={18}>Ps</Fit></div>
      <div className="-mt-[2px] ml-[34px] flex h-7 w-7 items-center justify-center border-2 border-[#add5ec] bg-[#0c1a24] pb-[1px] text-[16px] font-semibold leading-none text-[#add5ec]"><Fit w={15}>Lr</Fit></div>
      <svg width="32" height="32" viewBox="0 0 32 32" className="ml-[32px]">
        <path d="M1 1l28-1-1 28-21 2z" fill="#e9efe9" stroke="#5e9a83" /><path d="M7 7l8-3 11 2v9L13 17z" fill="#111" /><path d="M7 7l8-3 11 2-11 4z" fill="#f5d31c" /><path d="M7 7l6 3v8l-6-2z" fill="#e0b000" /><path d="M16 13l6 1-1 3-6-1z" fill="#ddd" /><path d="M1 22l8-4 9 5-3 8H3z" fill="#e4e4e4" stroke="#888" /><circle cx="17" cy="19" r="3.500" fill="#cfcfcf" stroke="#666" /><path d="M20 24l8-5 3 3v7l-8 1z" fill="#dedede" stroke="#888" /><circle cx="26" cy="25.500" r="2.400" fill="#fff" stroke="#666" /><circle cx="7" cy="25" r="1.700" fill="#666" /><path d="M12 24v5" stroke="#777" />
      </svg>
      <svg width="32" height="32" viewBox="0 0 32 32" className="ml-[30px]">
        <g stroke="#000"><path d="M15 1h13v12H15z" fill="#d8d8d8" /><path d="M17 3h9v8h-9z" fill="#0b18e0" /><path d="M14 13h15l2 2-2 3H16z" fill="#d0d0d0" /><path d="M3 15h13v12H3z" fill="#d8d8d8" /><path d="M5 17h9v8H5z" fill="#0b18e0" /><path d="M2 27h16l2 2-2 2H1z" fill="#d0d0d0" /><path d="M22 8l-11 7 4 1-8 7 12-7-4-1z" fill="#ffee00" strokeWidth=".7" /></g>
      </svg>
      <svg width="34" height="34" viewBox="0 0 34 34" className="ml-[29px] -mt-px">
        <path d="M20 14l8-3 4 4-4 9z" fill="#f29a2e" />
        <path d="M2 8l5-2 17 14-3 11q-5-1-11-7Q3 18 2 8z" fill="#e3e9f1" stroke="#7c8da6" /><path d="M4 9l4-2 14 11-4 4z" fill="#5aaae4" />
        <path d="M15 2q6-1 9 4 1 4-1 7l-5-1-5 4-2-4 5-2 2-4z" fill="#eef1f5" stroke="#909bab" />
        <path d="M25 16q3 2 6 2 0 9-6 13-6-4-6-13 3 0 6-2z" fill="#fff" stroke="#777" /><path d="M25 18v6h-4.500l-.5-5q3 0 5-1zM25 24h4.500q-1.500 4-4.500 5.500z" fill="#2c7bd6" /><path d="M25 18q2 1 5 1l-.5 5H25zM25 24v5.500q-3-1.500-4.500-5.500z" fill="#f8c81c" />
      </svg>
      <div className="ml-auto flex items-center">
        <svg width="8" height="5" viewBox="0 0 8 5" className="mr-[14px]"><path d="M0 4.500L4 0l4 4.500z" fill="#fff" /></svg>
        {temps.map(([t, c], i) => (
          <span key={i} className={`w-[24.300px] font-['DejaVu_Sans',sans-serif] text-[10px] leading-none ${c}`}><Fit w={12}>{t}</Fit></span>
        ))}
        <svg width="16" height="16" viewBox="0 0 16 16" className="-ml-[2px]"><path d="M1.700 1v14" stroke="#fff" strokeWidth="1.600" /><path d="M3 2q3-1 5 .5V9Q6 7.500 3 8.500zM9 4q2 1.500 6-.5-1 3-2.500 5Q10 9.500 9 9z" fill="#fff" /></svg>
        <svg width="16" height="16" viewBox="0 0 16 16" className="ml-2"><path d="M5.500 4.500h9v7h-9zM7 14.500h6M10 12v2" fill="none" stroke="#fff" strokeWidth="1.400" /><path d="M1 3h4v3.500H1zM1.800 1v2M4.200 1v2M3 6v7.500h3" fill="none" stroke="#fff" strokeWidth="1.200" /></svg>
        <svg width="16" height="16" viewBox="0 0 16 16" className="ml-2"><path d="M0 5.500h2.500L6 2v12l-3.500-3.500H0z" fill="#fff" /><path d="M8 5.500q1.500 2.500 0 5M10 4q2.500 4 0 8M12 2.500q3.500 5.500 0 11" fill="none" stroke="#fff" strokeWidth="1.100" /></svg>
        <svg width="15" height="16" viewBox="0 0 15 16" className="ml-2"><path d="M0 2.500l6.300-.9v6H0zM7.200 1.500L15 .5v7.100H7.200zM0 8.500h6.300v6L0 13.600zM7.200 8.500H15v7l-7.800-1z" fill="#fff" /></svg>
        <div className="ml-[17px] flex w-[62px] flex-col items-center text-[12px] leading-[17px] text-white">
          <Fit w={28}>11:49</Fit>
          <Fit w={59}>25/08/2015</Fit>
        </div>
        <div className="ml-[9px] h-[39px] w-[14px] border border-[#8aa3c9] bg-[linear-gradient(135deg,#4c72ab,#0e3c80_50%,#1a4a92)]" />
      </div>
    </footer>
  );
}

export default function App() {
  return (
    <div className="relative flex h-[1080px] w-[1920px] flex-col overflow-hidden bg-white font-['Liberation_Sans',Arial,sans-serif]">
      <TabStrip />
      <Toolbar />
      <Navbar />
      <Dashboard />
      <div className="flex-1" />
      <Taskbar />
      <AddPackageDialog />
    </div>
  );
}
